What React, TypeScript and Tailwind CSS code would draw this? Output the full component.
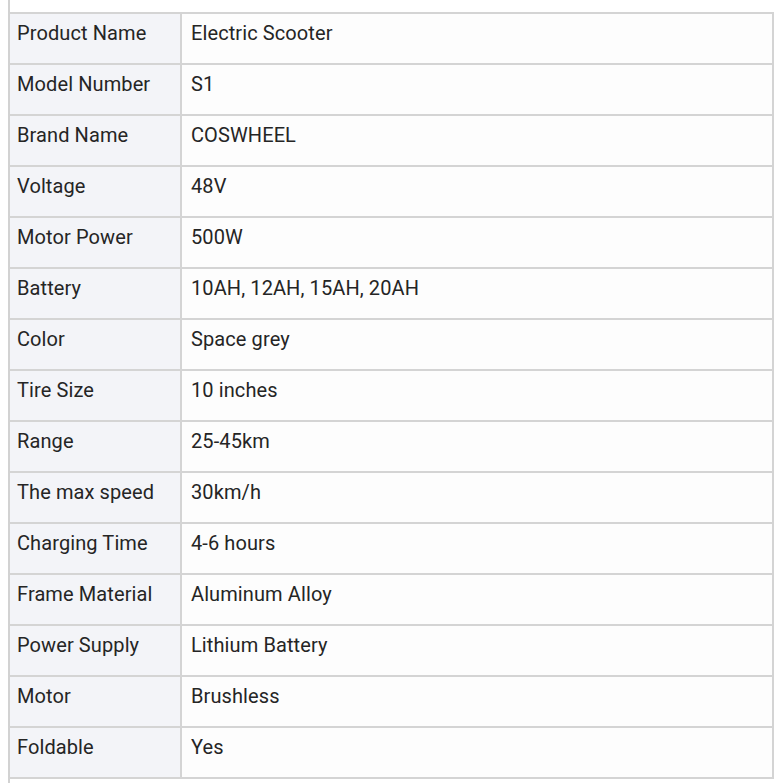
const rows: [string, string][] = [
  ["Product Name", "Electric Scooter"],
  ["Model Number", "S1"],
  ["Brand Name", "COSWHEEL"],
  ["Voltage", "48V"],
  ["Motor Power", "500W"],
  ["Battery", "10AH, 12AH, 15AH, 20AH"],
  ["Color", "Space grey"],
  ["Tire Size", "10 inches"],
  ["Range", "25-45km"],
  ["The max speed", "30km/h"],
  ["Charging Time", "4-6 hours"],
  ["Frame Material", "Aluminum Alloy"],
  ["Power Supply", "Lithium Battery"],
  ["Motor", "Brushless"],
  ["Foldable", "Yes"],
];

export default function App() {
  return (
    <div className="h-[783px] w-[783px] overflow-hidden bg-white pl-2 font-['Roboto',sans-serif] text-[20px] tracking-[0.1px] text-[#252525]">
      <div className="h-full w-[766px] border-l-2 border-[#d2d2d2] pt-3">
        <table className="w-full border-collapse">
          <tbody>
            {rows.map(([label, value]) => (
              <tr key={label} className="h-[51px]">
                <td className="w-[171px] border-2 border-l-0 border-[#d4d4d4] bg-[#f3f4f8] pl-[7px] pr-2 pb-3 align-middle leading-[24px]">
                  {label}
                </td>
                <td className="border-2 border-[#d4d4d4] bg-[#fdfdfd] pl-[9px] pr-2 pb-3 align-middle leading-[24px]">
                  {value}
                </td>
              </tr>
            ))}
          </tbody>
        </table>
      </div>
    </div>
  );
}
